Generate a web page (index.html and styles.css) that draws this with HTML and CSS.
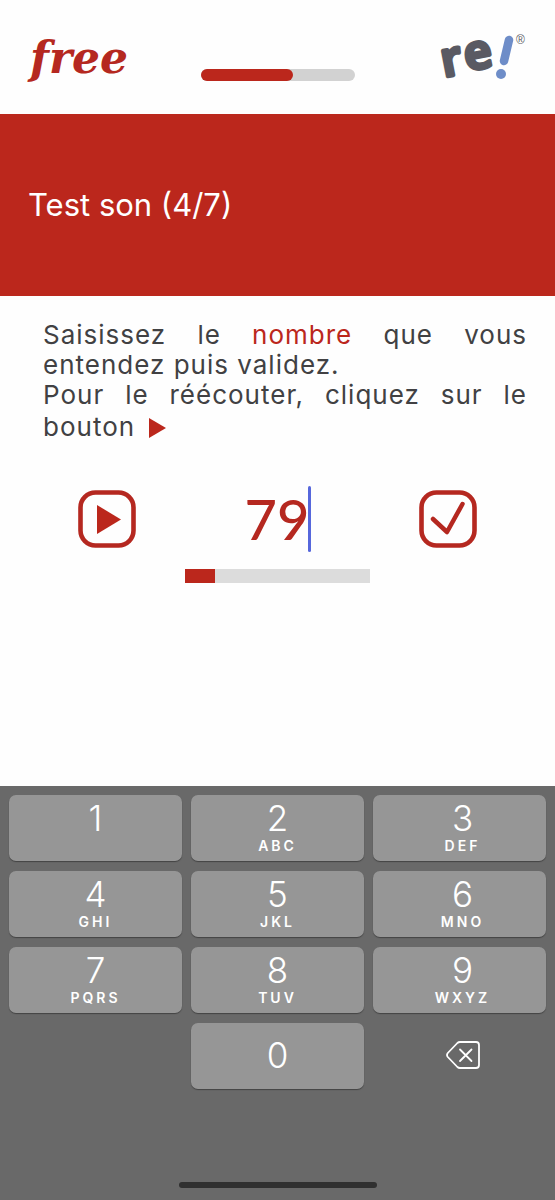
FILE: index.html
```html
<!DOCTYPE html>
<html lang="fr">
<head>
<meta charset="utf-8">
<meta name="viewport" content="width=device-width, initial-scale=1">
<title>Test son</title>
<link rel="stylesheet" href="styles.css">
</head>
<body>
<header class="topbar">
  <div class="brand">free</div>
  <div class="progress"><div class="progress-fill"></div></div>
  <svg class="logo" viewBox="0 0 97 50" role="img" aria-label="re!">
    <g class="logo-letters">
      <text transform="translate(14 45) rotate(-11)">r</text>
      <text transform="translate(37 39) rotate(-11)">e</text>
    </g>
    <path d="M79 8 74 29" stroke="#6e8dc8" stroke-width="8.500" stroke-linecap="round"/>
    <circle cx="71" cy="42" r="5" fill="#6e8dc8"/>
    <text class="logo-mark" x="86" y="12">®</text>
  </svg>
</header>
<section class="banner"><h1>Test son (4/7)</h1></section>
<main class="content">
  <p class="intro">
    <span class="line spread">Saisissez le <em>nombre</em> que vous</span>
    <span class="line">entendez puis validez.</span>
    <span class="line spread">Pour le réécouter, cliquez sur le</span>
    <span class="line last">bouton <svg class="mini-play" viewBox="0 0 17 20" aria-hidden="true"><path d="M0 0 17 10 0 20z" fill="#bb271c"/></svg></span>
  </p>
  <form class="answer">
    <button class="tool" type="button" aria-label="Réécouter">
      <svg viewBox="0 0 58 58"><rect x="2.500" y="2.500" width="53" height="53" rx="15" fill="none" stroke="#b52820" stroke-width="4.600"/><path d="M19 15v29l24-14.500z" fill="#bb271c"/></svg>
    </button>
    <div class="field"><input class="number" type="text" inputmode="numeric" value="79" size="2" aria-label="Nombre entendu"><span class="caret"></span></div>
    <button class="tool" type="button" aria-label="Valider">
      <svg viewBox="0 0 58 58" fill="none" stroke="#b52820" stroke-linecap="round" stroke-linejoin="round"><rect x="2.500" y="2.500" width="53" height="53" rx="15" stroke-width="4.600"/><path d="M14 29 28 42 43.500 14" stroke-width="4.500"/></svg>
    </button>
  </form>
  <div class="meter"><div class="meter-fill"></div></div>
</main>
<section class="keyboard" aria-label="Clavier">
  <div class="keys">
    <button class="key"><span>1</span><small></small></button>
    <button class="key"><span>2</span><small>ABC</small></button>
    <button class="key"><span>3</span><small>DEF</small></button>
    <button class="key"><span>4</span><small>GHI</small></button>
    <button class="key"><span>5</span><small>JKL</small></button>
    <button class="key"><span>6</span><small>MNO</small></button>
    <button class="key"><span>7</span><small>PQRS</small></button>
    <button class="key"><span>8</span><small>TUV</small></button>
    <button class="key"><span>9</span><small>WXYZ</small></button>
    <button class="key zero"><span>0</span></button>
    <button class="key erase" aria-label="Effacer">
      <svg viewBox="0 0 34 28" fill="none" stroke="#fff" stroke-width="1.800" stroke-linecap="round" stroke-linejoin="round"><path d="M14 1h16q3 0 3 3v20q0 3-3 3H14q-1.500 0-2.600-1L1.800 16q-1.600-2 0-4L11.400 2Q12.500 1 14 1z"/><path d="m14 8.500 11.500 11.500M25.500 8.500 14 20"/></svg>
    </button>
  </div>
  <div class="home"></div>
</section>
</body>
</html>
```

FILE: styles.css
```css
* { box-sizing: border-box; }
body {
  margin: 0;
  min-height: 100vh;
  display: flex;
  flex-direction: column;
  background: #fefefe;
  color: #414143;
  font-family: Inter, "Liberation Sans", sans-serif;
}
button { border: 0; padding: 0; background: none; color: inherit; font: inherit; }
svg { display: block; }

.topbar {
  display: grid;
  grid-template-columns: 1fr 154px 1fr;
  align-items: center;
  height: 114px;
  padding: 0 28px;
}
.brand {
  padding: 2px 0 0 2px;
  color: #b52820;
  font: italic bold 44px/48px "DejaVu Serif", serif;
}
.progress {
  height: 12px;
  margin-top: 36px;
  border-radius: 6px;
  background: #d2d2d2;
}
.progress-fill { width: 60%; height: 100%; border-radius: 6px; background: #bb271c; }
.logo { justify-self: end; width: 97px; height: 50px; overflow: visible; }
.logo-letters {
  fill: #5a5a63;
  stroke: #5a5a63;
  stroke-width: 4px;
  stroke-linejoin: round;
  font: 600 48px "Open Sans", sans-serif;
}
.logo-mark { fill: #5a5a63; font: 12px "Liberation Sans", sans-serif; }

.banner {
  display: flex;
  align-items: center;
  min-height: 182px;
  padding: 0 28px;
  background: #bb271c;
  color: #fff;
}
.banner h1 { margin: 0; font-size: 31px; line-height: 40px; font-weight: 400; }

.content { flex: 1; padding: 24px 0; }
.intro { margin: 0 28px 0 43px; font-size: 26px; line-height: 30px; letter-spacing: 1px; }
.line { display: block; }
.spread { text-align-last: justify; }
.intro em { color: #bb271c; font-style: normal; }
.last { line-height: 34px; }
.mini-play { display: inline-block; width: 17px; height: 20px; margin-left: 6px; vertical-align: -2px; }

.answer {
  display: flex;
  align-items: center;
  justify-content: space-between;
  margin-top: 42px;
  padding: 0 78px;
}
.tool { width: 58px; height: 58px; }
.field { position: relative; display: flex; }
.number {
  width: 66px;
  height: 66px;
  padding: 0 4px 0 0;
  border: 0;
  outline: 0;
  background: none;
  color: #b52820;
  font: 500 56px/66px Lato, sans-serif;
  text-align: center;
}
.caret { position: absolute; top: 0; right: 0; width: 3px; height: 66px; border-radius: 2px; background: #5667dc; }
.meter { width: 33.33%; height: 14px; margin: 17px auto 0; background: #dcdcdc; }
.meter-fill { width: 16%; height: 100%; background: #bb271c; }

.keyboard {
  display: flex;
  flex-direction: column;
  justify-content: space-between;
  min-height: 414px;
  padding: 9px 9px 12px;
  background: #696969;
  color: #fff;
}
.keys { display: grid; grid-template-columns: repeat(3, 1fr); grid-auto-rows: 66px; gap: 10px 9px; }
.key {
  display: flex;
  flex-direction: column;
  align-items: center;
  justify-content: center;
  padding-bottom: 2px;
  border-radius: 7px;
  background: #969696;
  box-shadow: 0 1px 1px #444;
  font-size: 35px;
  line-height: 38px;
  font-weight: 300;
}
.key:nth-child(3), .key:nth-child(6), .key:nth-child(9), .erase { padding-left: 6px; }
.key small { height: 18px; font-size: 14px; line-height: 18px; font-weight: 600; letter-spacing: 3px; }
.zero { grid-column: 2; }
.erase { background: none; box-shadow: none; }
.erase svg { width: 34px; height: 28px; }
.home { align-self: center; width: 198px; height: 6px; border-radius: 3px; background: #303030; }
```
